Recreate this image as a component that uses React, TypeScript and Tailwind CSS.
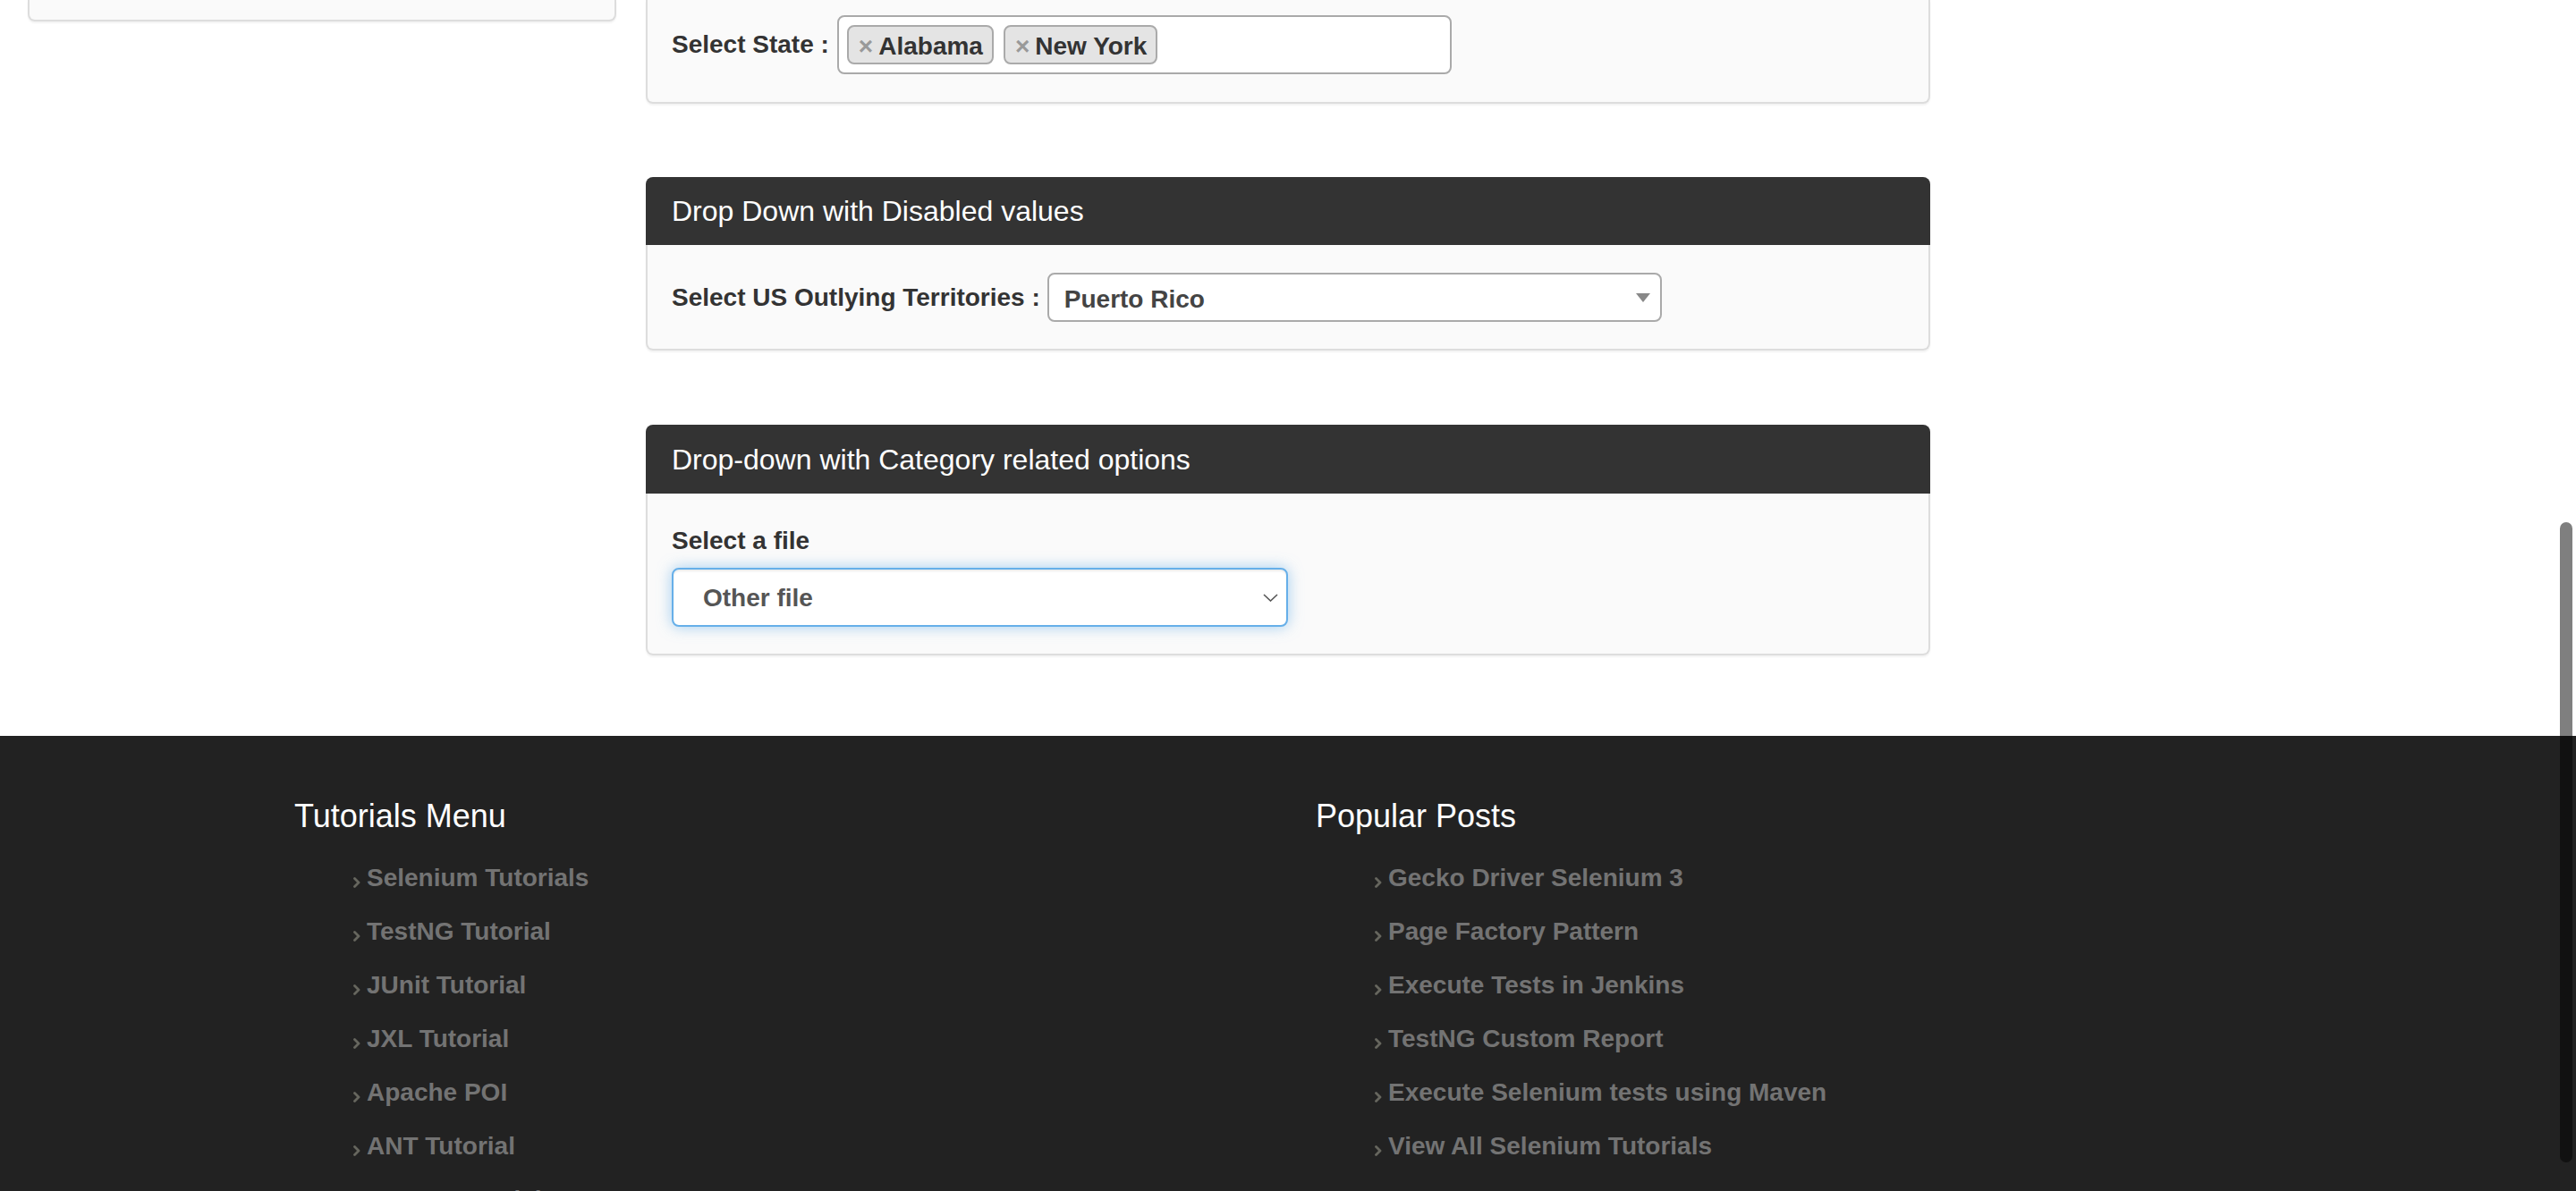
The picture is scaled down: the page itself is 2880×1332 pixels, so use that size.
import React from 'react';

const tutorials = [
    "Selenium Tutorials",
    "TestNG Tutorial",
    "JUnit Tutorial",
    "JXL Tutorial",
    "Apache POI",
    "ANT Tutorial",
    "Maven Tutorial",
];

const posts = [
    "Gecko Driver Selenium 3",
    "Page Factory Pattern",
    "Execute Tests in Jenkins",
    "TestNG Custom Report",
    "Execute Selenium tests using Maven",
    "View All Selenium Tutorials",
];

function Chevron() {
    return (
        <svg viewBox="0 0 8 12" className="w-[8px] h-[12px] mt-[10px] shrink-0">
            <path d="M1.5 1.5 L6 6 L1.5 10.5" fill="none" stroke="#66665e" strokeWidth="2.8" strokeLinecap="round" strokeLinejoin="round" />
        </svg>
    );
}

function FooterColumn({ title, items }: { title: string; items: string[] }) {
    return (
        <div>
            <h3 className="text-[36px] leading-[40px] text-white font-normal">{title}</h3>
            <ul className="mt-[19px] pl-[66px]">
                {items.map((item) => (
                    <li key={item} className="h-[60px] flex items-center gap-[7px] text-[28px] font-bold text-[#737373]">
                        <Chevron />
                        <span>{item}</span>
                    </li>
                ))}
            </ul>
        </div>
    );
}

function Chip({ label }: { label: string }) {
    return (
        <span className="h-[44px] flex items-center gap-[6px] pl-[11px] pr-[10px] bg-[#e4e4e4] border-2 border-[#aaa] rounded-[8px]">
            <span className="text-[28px] font-bold text-[#999] leading-none pt-[3px]">×</span>
            <span className="text-[28px] font-bold text-[#333] leading-none pt-[3px]">{label}</span>
        </span>
    );
}

export default function App() {
    return (
        <div className="relative h-[1332px] w-full overflow-hidden bg-white font-['Liberation_Sans',Arial,Helvetica,sans-serif] text-[#333]">

            {/* Conteúdo principal */}
            <div className="flex items-start pl-[31px] gap-[33px]">
                {/* Caixa lateral (só o final aparece) */}
                <div className="w-[658px] h-[24px] border-2 border-t-0 border-[#ddd] rounded-b-[8px] bg-[#fafafa] shadow-[0_2px_2px_rgba(0,0,0,0.05)]" />

                <div className="w-[1436px] pb-[90px]">
                    {/* Painel multi select (cortado no topo) */}
                    <div className="border-2 border-t-0 border-[#ddd] rounded-b-[8px] bg-[#fafafa] px-[27px] pt-[17px] pb-[31px] shadow-[0_2px_2px_rgba(0,0,0,0.05)] flex items-center gap-[9px]">
                        <span className="text-[28px] font-bold">Select State :</span>
                        <div className="w-[687px] h-[66px] border-2 border-[#aaa] rounded-[8px] bg-white flex items-center gap-[11px] pl-[9px]">
                            <Chip label="Alabama" />
                            <Chip label="New York" />
                        </div>
                    </div>

                    {/* Drop Down with Disabled values */}
                    <div className="mt-[82px] shadow-[0_2px_2px_rgba(0,0,0,0.05)] rounded-[8px]">
                        <div className="h-[76px] bg-[#333] rounded-t-[8px] px-[29px] flex items-center text-[32px] text-white">
                            Drop Down with Disabled values
                        </div>
                        <div className="border-2 border-t-0 border-[#ddd] rounded-b-[8px] bg-[#fafafa] px-[27px] pt-[31px] pb-[30px] flex items-center gap-[8px]">
                            <span className="text-[28px] font-bold">Select US Outlying Territories :</span>
                            <div className="w-[687px] h-[55px] border-2 border-[#aaa] rounded-[8px] bg-white flex items-center justify-between pl-[17px] pr-[11px]">
                                <span className="text-[28px] font-bold text-[#444] pt-[4px]">Puerto Rico</span>
                                <svg viewBox="0 0 16 10" className="w-[16px] h-[10px]">
                                    <path d="M0 0 H16 L8 10 Z" fill="#888" />
                                </svg>
                            </div>
                        </div>
                    </div>

                    {/* Drop-down with Category related options */}
                    <div className="mt-[83px] shadow-[0_2px_2px_rgba(0,0,0,0.05)] rounded-[8px]">
                        <div className="h-[77px] bg-[#333] rounded-t-[8px] px-[29px] flex items-center text-[32px] text-white">
                            Drop-down with Category related options
                        </div>
                        <div className="border-2 border-t-0 border-[#ddd] rounded-b-[8px] bg-[#fafafa] px-[27px] pt-[33px] pb-[30px]">
                            <div className="h-[40px] leading-[40px] text-[28px] font-bold mb-[10px]">Select a file</div>
                            <div className="w-[689px] h-[66px] border-2 border-[#66afe9] rounded-[8px] bg-white shadow-[inset_0_2px_2px_rgba(0,0,0,0.075),0_0_16px_rgba(102,175,233,0.6)] flex items-center justify-between pl-[33px] pr-[9px]">
                                <span className="text-[28px] font-bold text-[#555] pt-[2px]">Other file</span>
                                <svg viewBox="0 0 17 9" className="w-[17px] h-[9px]">
                                    <path d="M1 1 L8.5 8 L16 1" fill="none" stroke="#555" strokeWidth="1.6" />
                                </svg>
                            </div>
                        </div>
                    </div>
                </div>
            </div>

            {/* Rodapé */}
            <footer className="bg-[#222] pt-[70px] pl-[329px] h-[600px]">
                <div className="grid grid-cols-[1142px_1142px]">
                    <FooterColumn title="Tutorials Menu" items={tutorials} />
                    <FooterColumn title="Popular Posts" items={posts} />
                </div>
            </footer>

            {/* Barra de rolagem sobreposta */}
            <div className="absolute right-[4px] top-[584px] w-[14px] h-[716px] rounded-full bg-black/50" />
        </div>
    );
}
